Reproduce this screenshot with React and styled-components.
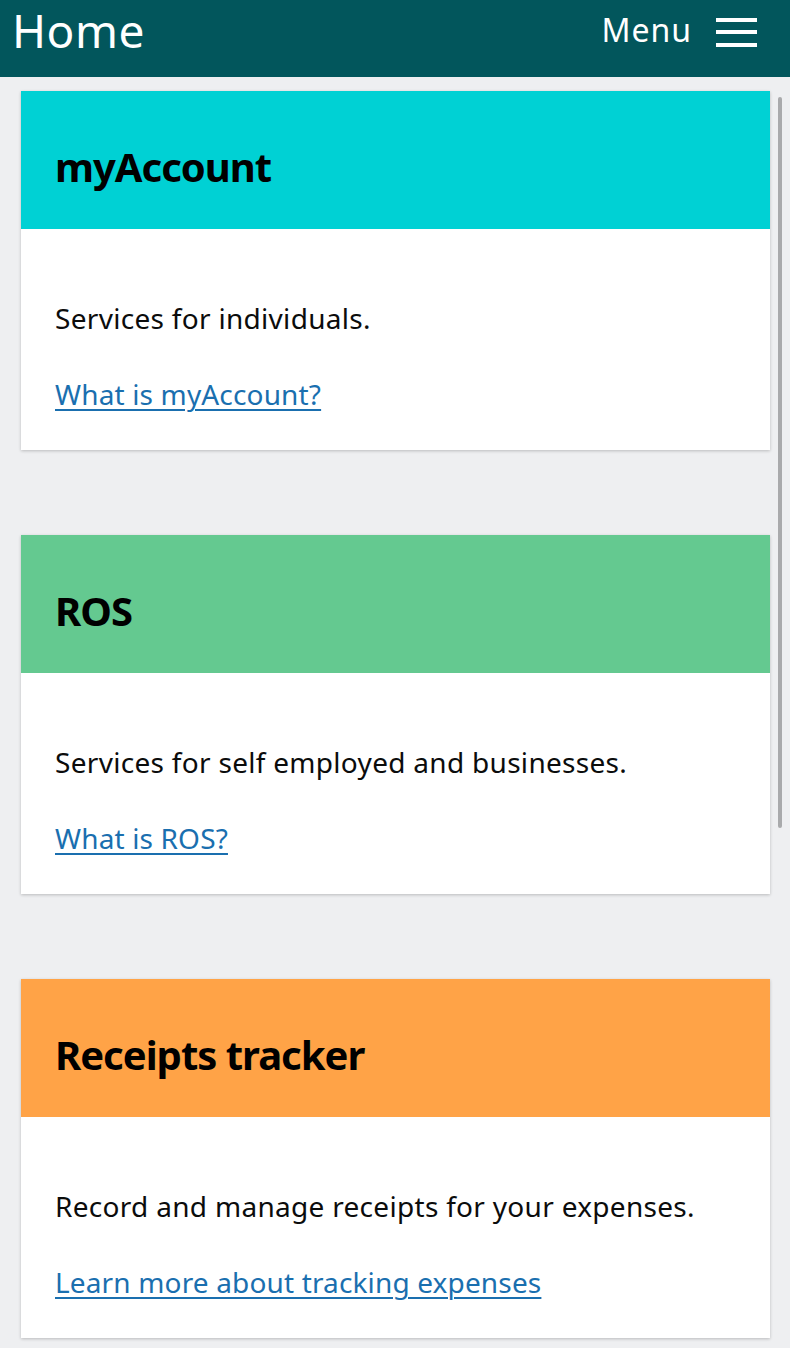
import React from 'react';
import styled, { createGlobalStyle } from 'styled-components';

const GlobalStyle = createGlobalStyle`
  html, body {
    margin: 0;
    padding: 0;
    background: #eeeff1;
    font-family: "Noto Sans", "Open Sans", sans-serif;
    color: #0b0c0c;
  }
`;

const services = [
  {
    title: 'myAccount',
    colour: '#00d1d4',
    text: 'Services for individuals.',
    link: 'What is myAccount?',
  },
  {
    title: 'ROS',
    colour: '#64c990',
    text: 'Services for self employed and businesses.',
    link: 'What is ROS?',
  },
  {
    title: 'Receipts tracker',
    colour: '#ffa347',
    text: 'Record and manage receipts for your expenses.',
    link: 'Learn more about tracking expenses',
  },
];

function App() {
  return (
    <Page>
      <GlobalStyle />
      <TopBar>
        <PageTitle>Home</PageTitle>
        <MenuButton>
          Menu
          <Burger>
            <span />
            <span />
            <span />
          </Burger>
        </MenuButton>
      </TopBar>
      <Main>
        {services.map((s) => (
          <Card key={s.title}>
            <CardHead $colour={s.colour}>
              <CardTitle>{s.title}</CardTitle>
            </CardHead>
            <CardBody>
              <Text>{s.text}</Text>
              <Link href="#">{s.link}</Link>
            </CardBody>
          </Card>
        ))}
        <ScrollThumb />
      </Main>
    </Page>
  );
}

const Page = styled.div`
  min-height: 1348px;
  overflow: hidden;
`;

const TopBar = styled.header`
  height: 77px;
  background: #02565c;
  display: flex;
  align-items: center;
  justify-content: space-between;
  padding: 0 33px 0 12px;
  box-sizing: border-box;
`;

const PageTitle = styled.h1`
  margin: -17px 0 0;
  font-size: 46px;
  font-weight: 400;
  color: #fff;
  letter-spacing: 0.5px;
`;

const MenuButton = styled.button`
  display: flex;
  align-items: center;
  gap: 24px;
  margin-top: -19px;
  background: none;
  border: none;
  padding: 0;
  color: #fff;
  font-family: inherit;
  font-size: 32px;
  letter-spacing: 1px;
`;

const Burger = styled.span`
  display: flex;
  flex-direction: column;
  gap: 8.5px;
  width: 41px;
  margin-top: 6px;

  span {
    display: block;
    height: 4px;
    background: #fff;
  }
`;

const Main = styled.main`
  position: relative;
  display: flex;
  flex-direction: column;
  gap: 85px;
  padding: 14px 20px 0 21px;
`;

const Card = styled.section`
  background: #fff;
  box-shadow: 0 1px 3px rgba(0, 0, 0, 0.22);
`;

const CardHead = styled.div`
  height: 138px;
  background: ${(p) => p.$colour};
  display: flex;
  align-items: center;
  padding: 12px 34px 0;
  box-sizing: border-box;
`;

const CardTitle = styled.h2`
  margin: 0;
  font-size: 40px;
  font-weight: 700;
  letter-spacing: -1px;
  color: #000;
`;

const CardBody = styled.div`
  height: 221px;
  padding: 68px 34px 0;
  box-sizing: border-box;
`;

const Text = styled.p`
  margin: 0 0 34px;
  font-size: 28px;
  line-height: 42px;
  letter-spacing: 0.3px;
`;

const Link = styled.a`
  font-size: 28px;
  line-height: 42px;
  letter-spacing: 0.15px;
  color: #1a6faf;
  text-decoration: underline;
  text-underline-offset: 4px;
  text-decoration-thickness: 2px;
`;

const ScrollThumb = styled.div`
  position: absolute;
  top: 20px;
  right: 8px;
  width: 4px;
  height: 731px;
  border-radius: 2px;
  background: #a9aaac;
`;

export default App;
